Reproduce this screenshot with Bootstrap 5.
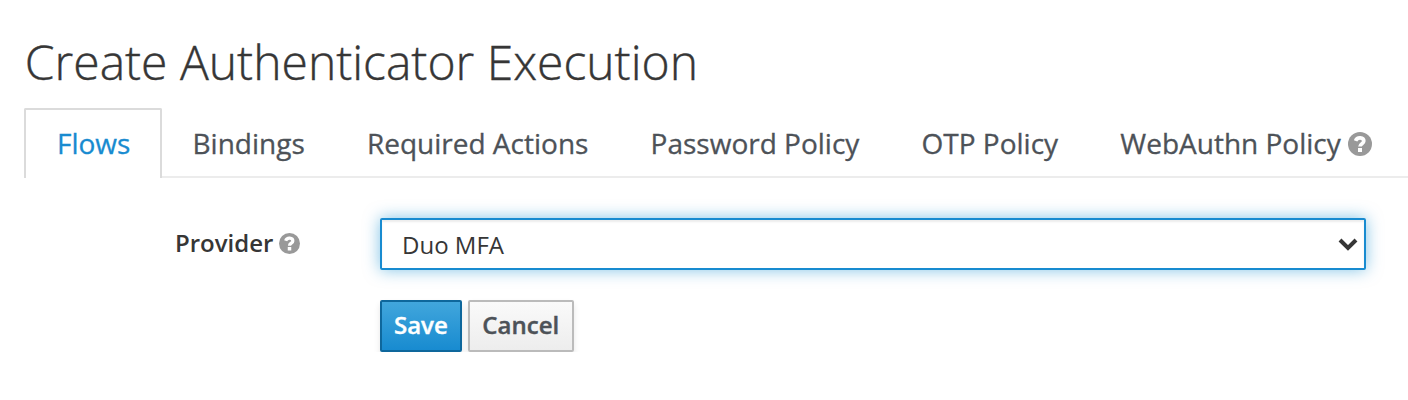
<!DOCTYPE html>
<html lang="en"><head><meta charset="utf-8"><title>Create Authenticator Execution</title>
<link href="https://cdn.jsdelivr.net/npm/bootstrap@5.3.0/dist/css/bootstrap.min.css" rel="stylesheet">
<style>
body{font-family:"Open Sans",sans-serif;color:#363636;background:#fff;overflow:hidden}
h1{font-size:48px;font-weight:300;line-height:56px;padding:34px 0 0 24.8px;height:108px;color:#363636;-webkit-text-stroke:.4px #363636}
.nav-tabs{margin-left:24px;height:70px;border-bottom:2px solid #ececec}
.nav-tabs .nav-link{height:70px;margin-bottom:-2px;padding:0 31.1px;border:0;border-radius:0;font-size:28px;line-height:70px;color:#4d5258;white-space:nowrap;-webkit-text-stroke:.3px}
.nav-tabs .nav-link.active{color:#188bd0;border:2px solid #dbdbdb;border-bottom:0;border-radius:2px 2px 0 0;line-height:66px;padding:0 29.7px 0 31px}
.nav-tabs .nav-item:nth-child(2) .nav-link{padding-left:30.4px}
.help{fill:#999}
.tab-help{margin:2px 0 0 7px}
.provider-label{width:380px;padding-left:175px;font-size:24px;font-weight:600}
.provider-label span{margin-top:-2px}
.provider-label .help{margin:-1px 0 0 6px}
.provider-row{margin-top:40px}
.provider-select{width:986px;height:52px;border:2px solid #188bd0;border-radius:2px;padding:2px 6px 0 20px;font-size:24px;box-shadow:inset 0 2px 2px rgba(3,3,3,.075),0 0 16px rgba(0,136,206,.5)}
.provider-select svg{margin-top:-2px}
.action-row{margin:30px 0 0 380px;gap:6px}
.action-row .btn{height:52px;border:2px solid #bbb;border-radius:2px;padding:0 12px 2px;font-size:24px;font-weight:600;line-height:46px;box-shadow:0 4px 6px rgba(3,3,3,.1);-webkit-text-stroke:.4px}
.action-row .btn-save{color:#fff;background:linear-gradient(#41a6dc,#188bd0);border-color:#0e679c}
.action-row .btn-cancel{color:#4d5258;background:linear-gradient(#fafafa,#ededed);width:106px}
</style></head><body>
<h1 class="m-0">Create Authenticator Execution</h1>
<ul class="nav nav-tabs flex-nowrap">
<li class="nav-item"><a class="nav-link active" href="#">Flows</a></li>
<li class="nav-item"><a class="nav-link" href="#">Bindings</a></li>
<li class="nav-item"><a class="nav-link" href="#">Required Actions</a></li>
<li class="nav-item"><a class="nav-link" href="#">Password Policy</a></li>
<li class="nav-item"><a class="nav-link" href="#">OTP Policy</a></li>
<li class="nav-item"><a class="nav-link d-flex align-items-center pe-0" href="#"><span>WebAuthn Policy</span><svg class="help tab-help" width="24" height="24" viewBox="0 0 24 24"><circle cx="12" cy="12" r="12"/><path d="M7.6 8.8C9.2 4.4 15.8 5.2 15.8 9c0 2.7-3.8 2.6-3.8 5.6" fill="none" stroke="#fff" stroke-width="3.7"/><path d="M10 16h4v4h-4z" fill="#fff"/></svg></a></li>
</ul>
<div class="provider-row d-flex align-items-center"><label class="provider-label d-flex align-items-center"><span>Provider</span><svg class="help" width="21" height="21" viewBox="0 0 24 24"><circle cx="12" cy="12" r="12"/><path d="M7.6 8.8C9.2 4.4 15.8 5.2 15.8 9c0 2.7-3.8 2.6-3.8 5.6" fill="none" stroke="#fff" stroke-width="3.7"/><path d="M10 16h4v4h-4z" fill="#fff"/></svg></label>
<div class="provider-select d-flex align-items-center justify-content-between"><span>Duo MFA</span><svg width="20" height="14" viewBox="0 0 20 14"><path d="M2 3l8 8 8-8" fill="none" stroke="#363636" stroke-width="4"/></svg></div></div>
<div class="action-row d-flex"><button class="btn btn-save">Save</button><button class="btn btn-cancel">Cancel</button></div>
<script src="https://cdn.jsdelivr.net/npm/bootstrap@5.3.0/dist/js/bootstrap.bundle.min.js"></script>
</body></html>
